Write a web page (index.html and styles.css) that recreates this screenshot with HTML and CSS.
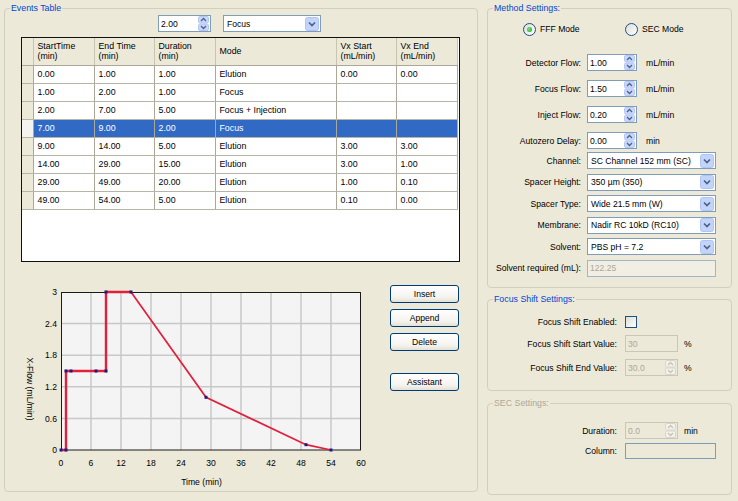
FILE: index.html
```html
<!DOCTYPE html>
<html>
<head>
<meta charset="utf-8">
<link rel="stylesheet" href="styles.css">
</head>
<body>
<div class="window">
  <fieldset class="group events">
    <legend>Events Table</legend>
    <div class="toolbar">
      <div class="field spin w53"><span>2.00</span>
        <svg class="spinbtn" width="11" height="15" viewBox="0 0 11 15"><rect x="0.5" y="0.5" width="10" height="6.5" rx="1.5" class="sb"/><rect x="0.5" y="8" width="10" height="6.5" rx="1.5" class="sb"/><path d="M3 5 L5.5 2.5 L8 5" class="sa"/><path d="M3 10 L5.5 12.5 L8 10" class="sa"/></svg>
      </div>
      <div class="field combo w98"><span>Focus</span>
        <svg class="drop" width="14" height="14" viewBox="0 0 14 14"><rect x="0.5" y="0.5" width="13" height="13" rx="2" class="db"/><path d="M4 5.5 L7 8.5 L10 5.5" class="da"/></svg>
      </div>
    </div>
    <div class="grid-wrap">
      <table class="grid">
        <tr class="head">
          <th class="c-sel"></th>
          <th class="c1">StartTime<br>(min)</th>
          <th class="c2">End Time<br>(min)</th>
          <th class="c3">Duration<br>(min)</th>
          <th class="c4">Mode</th>
          <th class="c5">Vx Start<br>(mL/min)</th>
          <th class="c6">Vx End<br>(mL/min)</th>
          <th class="c-fill"></th>
        </tr>
        <tr><td class="sel"></td><td>0.00</td><td>1.00</td><td>1.00</td><td>Elution</td><td>0.00</td><td>0.00</td><td class="fill"></td></tr>
        <tr><td class="sel"></td><td>1.00</td><td>2.00</td><td>1.00</td><td>Focus</td><td></td><td></td><td class="fill"></td></tr>
        <tr><td class="sel"></td><td>2.00</td><td>7.00</td><td>5.00</td><td>Focus + Injection</td><td></td><td></td><td class="fill"></td></tr>
        <tr class="selected"><td class="sel"></td><td>7.00</td><td>9.00</td><td>2.00</td><td>Focus</td><td></td><td></td><td class="fill"></td></tr>
        <tr><td class="sel"></td><td>9.00</td><td>14.00</td><td>5.00</td><td>Elution</td><td>3.00</td><td>3.00</td><td class="fill"></td></tr>
        <tr><td class="sel"></td><td>14.00</td><td>29.00</td><td>15.00</td><td>Elution</td><td>3.00</td><td>1.00</td><td class="fill"></td></tr>
        <tr><td class="sel"></td><td>29.00</td><td>49.00</td><td>20.00</td><td>Elution</td><td>1.00</td><td>0.10</td><td class="fill"></td></tr>
        <tr><td class="sel"></td><td>49.00</td><td>54.00</td><td>5.00</td><td>Elution</td><td>0.10</td><td>0.00</td><td class="fill"></td></tr>
      </table>
    </div>
    <div class="lower">
      <svg class="chart" width="375" height="229" viewBox="0 0 375 229">
        <rect x="56" y="30" width="300" height="158" fill="#f4f4f4"/>
        <g stroke="#c8c8c8" stroke-width="1.5">
          <line x1="86" y1="30" x2="86" y2="188"/><line x1="116" y1="30" x2="116" y2="188"/><line x1="146" y1="30" x2="146" y2="188"/>
          <line x1="176" y1="30" x2="176" y2="188"/><line x1="206" y1="30" x2="206" y2="188"/><line x1="236" y1="30" x2="236" y2="188"/>
          <line x1="266" y1="30" x2="266" y2="188"/><line x1="296" y1="30" x2="296" y2="188"/><line x1="326" y1="30" x2="326" y2="188"/>
          <line x1="56" y1="61.6" x2="356" y2="61.6"/><line x1="56" y1="93.2" x2="356" y2="93.2"/>
          <line x1="56" y1="124.8" x2="356" y2="124.8"/><line x1="56" y1="156.4" x2="356" y2="156.4"/>
        </g>
        <rect x="56.5" y="30.5" width="299" height="157.5" fill="none" stroke="#1a1a1a"/>
        <polyline points="56,188 61,188 61,109 66,109 91,109 101,109 101,30 126,30" fill="none" stroke="#e0203c" stroke-width="2.4"/>
        <polyline points="126,30 201,135.3 301,182.7 326,188" fill="none" stroke="#e0203c" stroke-width="1.7"/>
        <g fill="#1d1d80">
          <rect x="54.5" y="186.5" width="3" height="3"/><rect x="59.5" y="186.5" width="3" height="3"/>
          <rect x="59.5" y="107.5" width="3" height="3"/><rect x="64.5" y="107.5" width="3" height="3"/>
          <rect x="89.5" y="107.5" width="3" height="3"/><rect x="99.5" y="107.5" width="3" height="3"/>
          <rect x="99.5" y="28.5" width="3" height="3"/><rect x="124.5" y="28.5" width="3" height="3"/>
          <rect x="199.5" y="133.8" width="3" height="3"/><rect x="299.5" y="181.2" width="3" height="3"/>
          <rect x="324.5" y="186.5" width="3" height="3"/>
        </g>
        <g class="ax" text-anchor="end">
          <text x="52" y="33.2">3</text><text x="52" y="64.8">2.4</text><text x="52" y="96.4">1.8</text>
          <text x="52" y="128">1.2</text><text x="52" y="159.6">0.6</text><text x="52" y="191.2">0</text>
        </g>
        <g class="ax" text-anchor="middle">
          <text x="56" y="204">0</text><text x="86" y="204">6</text><text x="116" y="204">12</text><text x="146" y="204">18</text>
          <text x="176" y="204">24</text><text x="206" y="204">30</text><text x="236" y="204">36</text><text x="266" y="204">42</text>
          <text x="296" y="204">48</text><text x="326" y="204">54</text><text x="356" y="204">60</text>
          <text x="196.5" y="223">Time (min)</text>
          <text x="25" y="127" transform="rotate(90 25 127)" dy="3">X-Flow  (mL/min)</text>
        </g>
      </svg>
      <div class="buttons">
        <div class="btn">Insert</div>
        <div class="btn">Append</div>
        <div class="btn">Delete</div>
        <div class="btn assistant">Assistant</div>
      </div>
    </div>
  </fieldset>

  <div class="right">
    <fieldset class="group method">
      <legend>Method Settings:</legend>
      <div class="radios">
        <div class="radio-item"><span class="radio"><span class="dot"></span></span><span>FFF Mode</span></div>
        <div class="radio-item"><span class="radio"></span><span>SEC Mode</span></div>
      </div>
      <div class="spin-rows">
        <div class="row"><span class="lbl">Detector Flow:</span>
          <div class="field spin w50"><span>1.00</span><svg class="spinbtn" width="11" height="15" viewBox="0 0 11 15"><rect x="0.5" y="0.5" width="10" height="6.5" rx="1.5" class="sb"/><rect x="0.5" y="8" width="10" height="6.5" rx="1.5" class="sb"/><path d="M3 5 L5.5 2.5 L8 5" class="sa"/><path d="M3 10 L5.5 12.5 L8 10" class="sa"/></svg></div>
          <span class="unit">mL/min</span></div>
        <div class="row"><span class="lbl">Focus Flow:</span>
          <div class="field spin w50"><span>1.50</span><svg class="spinbtn" width="11" height="15" viewBox="0 0 11 15"><rect x="0.5" y="0.5" width="10" height="6.5" rx="1.5" class="sb"/><rect x="0.5" y="8" width="10" height="6.5" rx="1.5" class="sb"/><path d="M3 5 L5.5 2.5 L8 5" class="sa"/><path d="M3 10 L5.5 12.5 L8 10" class="sa"/></svg></div>
          <span class="unit">mL/min</span></div>
        <div class="row"><span class="lbl">Inject Flow:</span>
          <div class="field spin w50"><span>0.20</span><svg class="spinbtn" width="11" height="15" viewBox="0 0 11 15"><rect x="0.5" y="0.5" width="10" height="6.5" rx="1.5" class="sb"/><rect x="0.5" y="8" width="10" height="6.5" rx="1.5" class="sb"/><path d="M3 5 L5.5 2.5 L8 5" class="sa"/><path d="M3 10 L5.5 12.5 L8 10" class="sa"/></svg></div>
          <span class="unit">mL/min</span></div>
        <div class="row"><span class="lbl">Autozero Delay:</span>
          <div class="field spin w50"><span>0.00</span><svg class="spinbtn" width="11" height="15" viewBox="0 0 11 15"><rect x="0.5" y="0.5" width="10" height="6.5" rx="1.5" class="sb"/><rect x="0.5" y="8" width="10" height="6.5" rx="1.5" class="sb"/><path d="M3 5 L5.5 2.5 L8 5" class="sa"/><path d="M3 10 L5.5 12.5 L8 10" class="sa"/></svg></div>
          <span class="unit">min</span></div>
      </div>
      <div class="combo-rows">
        <div class="row"><span class="lbl">Channel:</span>
          <div class="field combo w129"><span>SC Channel 152 mm (SC)</span><svg class="drop" width="14" height="14" viewBox="0 0 14 14"><rect x="0.5" y="0.5" width="13" height="13" rx="2" class="db"/><path d="M4 5.5 L7 8.5 L10 5.5" class="da"/></svg></div></div>
        <div class="row"><span class="lbl">Spacer Height:</span>
          <div class="field combo w129"><span>350 µm (350)</span><svg class="drop" width="14" height="14" viewBox="0 0 14 14"><rect x="0.5" y="0.5" width="13" height="13" rx="2" class="db"/><path d="M4 5.5 L7 8.5 L10 5.5" class="da"/></svg></div></div>
        <div class="row"><span class="lbl">Spacer Type:</span>
          <div class="field combo w129"><span>Wide 21.5 mm (W)</span><svg class="drop" width="14" height="14" viewBox="0 0 14 14"><rect x="0.5" y="0.5" width="13" height="13" rx="2" class="db"/><path d="M4 5.5 L7 8.5 L10 5.5" class="da"/></svg></div></div>
        <div class="row"><span class="lbl">Membrane:</span>
          <div class="field combo w129"><span>Nadir RC 10kD (RC10)</span><svg class="drop" width="14" height="14" viewBox="0 0 14 14"><rect x="0.5" y="0.5" width="13" height="13" rx="2" class="db"/><path d="M4 5.5 L7 8.5 L10 5.5" class="da"/></svg></div></div>
        <div class="row"><span class="lbl">Solvent:</span>
          <div class="field combo w129"><span>PBS pH = 7.2</span><svg class="drop" width="14" height="14" viewBox="0 0 14 14"><rect x="0.5" y="0.5" width="13" height="13" rx="2" class="db"/><path d="M4 5.5 L7 8.5 L10 5.5" class="da"/></svg></div></div>
        <div class="row"><span class="lbl">Solvent required (mL):</span>
          <div class="field readonly w129"><span>122.25</span></div></div>
      </div>
    </fieldset>

    <fieldset class="group shift">
      <legend>Focus Shift Settings:</legend>
      <div class="row chk-row"><span class="lbl">Focus Shift Enabled:</span><span class="check"></span></div>
      <div class="row"><span class="lbl">Focus Shift Start Value:</span>
        <div class="field disabled w53"><span>30</span></div><span class="pct">%</span></div>
      <div class="row"><span class="lbl">Focus Shift End Value:</span>
        <div class="field disabled spin w53"><span>30.0</span><svg class="spinbtn off" width="11" height="15" viewBox="0 0 11 15"><rect x="0.5" y="0.5" width="10" height="6.5" rx="1.5" class="sb"/><rect x="0.5" y="8" width="10" height="6.5" rx="1.5" class="sb"/><path d="M3 5 L5.5 2.5 L8 5" class="sa"/><path d="M3 10 L5.5 12.5 L8 10" class="sa"/></svg></div><span class="pct">%</span></div>
    </fieldset>

    <fieldset class="group sec">
      <legend>SEC Settings:</legend>
      <div class="row dur-row"><span class="lbl">Duration:</span>
        <div class="field disabled spin w53"><span>0.0</span><svg class="spinbtn off" width="11" height="15" viewBox="0 0 11 15"><rect x="0.5" y="0.5" width="10" height="6.5" rx="1.5" class="sb"/><rect x="0.5" y="8" width="10" height="6.5" rx="1.5" class="sb"/><path d="M3 5 L5.5 2.5 L8 5" class="sa"/><path d="M3 10 L5.5 12.5 L8 10" class="sa"/></svg></div><span class="pct">min</span></div>
      <div class="row col-row"><span class="lbl">Column:</span>
        <div class="field colfield w91"></div></div>
    </fieldset>
  </div>
</div>
</body>
</html>
```

FILE: styles.css
```css
* { box-sizing: border-box; }
html, body { margin: 0; padding: 0; }
body {
  background: #ece9d8;
  font-family: "Liberation Sans", Arial, sans-serif;
  font-size: 8.6px;
  color: #000;
  width: 738px;
  height: 501px;
  overflow: hidden;
}
.window { display: flex; align-items: flex-start; gap: 9px; padding: 1px 0 0 4px; }

.group { margin: 0; padding: 0; border: 1px solid #d0d0bf; border-radius: 4px; min-width: 0; }
.group > legend { margin-left: 5px; padding: 0 1px; height: 14px; line-height: 14px; color: #0046d5; font-size: 8.8px; }

.events { width: 474px; height: 491px; }

/* generic fields */
.field { height: 17px; border: 1px solid #7f9db9; background: #fff; display: flex; align-items: center; justify-content: space-between; padding: 0 1px 0 2px; white-space: nowrap; }
.combo { padding-left: 3px; }
.w50 { width: 50px; } .w53 { width: 53px; } .w91 { width: 91px; } .w98 { width: 98px; } .w129 { width: 129px; }
.spinbtn, .drop { display: block; flex: none; }
.sb { fill: #c9d7fb; stroke: #b4c6f2; }
.sa { fill: none; stroke: #4d6185; stroke-width: 1.3; }
.db { fill: #c3d4fb; stroke: #b0c4f3; }
.da { fill: none; stroke: #4d6185; stroke-width: 1.7; }
.spinbtn.off .sb { fill: #f3f2ea; stroke: #d8d6cb; }
.spinbtn.off .sa { stroke: #c5c3b6; }

.toolbar { display: flex; gap: 12px; padding-left: 153px; height: 17px; }

/* table */
.grid-wrap { margin: 5px 0 0 16px; width: 439px; height: 225px; border: 1px solid #111; background: #fff; overflow: hidden; }
.grid { border-collapse: collapse; table-layout: fixed; width: 437px; font-size: 8.8px; }
.grid th, .grid td { padding: 0 0 0 4px; text-align: left; white-space: nowrap; overflow: hidden; }
.grid tr.head { height: 27px; }
.grid th { background: #ece9d8; font-weight: normal; line-height: 10px; vertical-align: middle; border-right: 1px solid #c7c5b2; border-bottom: 1px solid #aca899; }
.grid tr { height: 18px; }
.grid td { border-right: 1px solid #aca899; border-bottom: 1px solid #b8b4a6; vertical-align: middle; }
.c-sel { width: 11px; }
.c1 { width: 61px; } .c2 { width: 60px; } .c3 { width: 61px; } .c4 { width: 121px; } .c5 { width: 60px; } .c6 { width: 61px; }
.grid th.c-fill { border: none; background: #fff; }
.grid td.fill { border: none; background: #fff; }
.grid td.sel { background: #ece9d8; padding: 0; }
.grid th.c-sel { padding: 0; }
.grid tr.selected td { background: #316ac5; color: #fff; }
.grid tr.selected td.sel { background: #f4f3ee; }
.grid tr.selected td.fill { background: #fff; }

/* chart + buttons */
.lower { display: flex; align-items: flex-start; }
.chart { display: block; flex: none; }
.ax { font-family: "Liberation Sans", Arial, sans-serif; font-size: 8.6px; fill: #000; }
.buttons { display: flex; flex-direction: column; gap: 6px; margin: 23px 0 0 10px; width: 69px; }
.btn { height: 18px; border: 1px solid #003c74; border-radius: 3px; background: linear-gradient(#ffffff, #f4f3ee 70%, #e3e1d6); display: flex; align-items: center; justify-content: center; }
.btn.assistant { margin-top: 16px; }

/* right column */
.right { width: 245px; display: flex; flex-direction: column; }
.method { height: 287px; }
.shift { margin-top: 4px; height: 99px; }
.sec { margin-top: 5px; height: 99px; }
.sec > legend { color: #aca899; }

.radios { display: flex; align-items: center; height: 14px; margin: 7px 0 0 35px; }
.radio-item { display: flex; align-items: center; gap: 4px; width: 102px; }
.radio { width: 13px; height: 13px; border-radius: 50%; border: 1px solid #1c5180; background: linear-gradient(135deg, #dcdcd7, #ffffff); display: flex; align-items: center; justify-content: center; }
.dot { width: 5px; height: 5px; border-radius: 50%; background: radial-gradient(circle at 40% 40%, #7be07b, #1e9e1e); }

.row { display: flex; align-items: center; height: 17px; }
.lbl { text-align: right; white-space: nowrap; flex: none; }
.method .lbl { width: 93px; margin-right: 6px; }
.unit { margin-left: 9px; }
.spin-rows { margin-top: 18px; display: flex; flex-direction: column; gap: 9px; }
.combo-rows { margin-top: 3px; display: flex; flex-direction: column; gap: 4.6px; }
.readonly { background: #f1efe4; border-color: #a5b4c6; color: #aca899; }

.shift .lbl, .sec .lbl { width: 129px; margin-right: 8px; }
.chk-row { height: 12px; margin-top: 10px; }
.check { width: 12px; height: 12px; border: 1px solid #1c5180; background: linear-gradient(135deg, #dcdcd7, #ffffff); }
.shift .row + .row { margin-top: 7px; }
.disabled { background: #ece9d8; border-color: #c9c7ba; color: #aca899; }
.pct { margin-left: 6px; }
.dur-row { margin-top: 12px; }
.col-row { margin-top: 4px; height: 16px; }
.colfield { height: 16px; background: #ece9d8; border-color: #7f9db9; }
```
